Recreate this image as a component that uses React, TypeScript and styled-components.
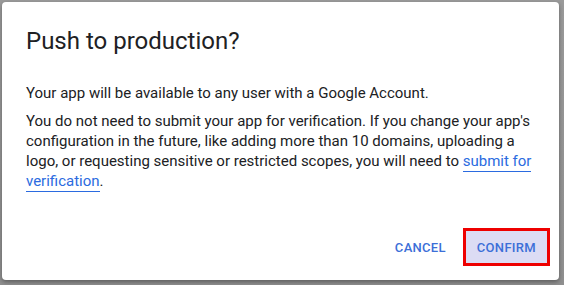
import React from "react";
import styled, { createGlobalStyle } from "styled-components";

const GlobalStyle = createGlobalStyle`
  html, body {
    margin: 0;
    padding: 0;
    background: #939393;
  }
  body {
    font-family: Roboto, "Liberation Sans", Arial, sans-serif;
    -webkit-font-smoothing: antialiased;
  }
`;

const Backdrop = styled.div`
  width: 564px;
  height: 285px;
  box-sizing: border-box;
  padding: 2px 5px 5px 2px;
  background: linear-gradient(to bottom, #9a9a9a 0%, #8f8f8f 100%);
`;

const Dialog = styled.div`
  width: 557px;
  height: 278px;
  box-sizing: border-box;
  background: #ffffff;
  border-radius: 4px;
  box-shadow: 0 2px 4px rgba(0, 0, 0, 0.35);
  padding: 23px 9px 14px 24px;
  display: flex;
  flex-direction: column;
`;

const Title = styled.h2`
  margin: 0;
  font-size: 24px;
  line-height: 32px;
  font-weight: 400;
  color: #202124;
`;

const Body = styled.div`
  margin-top: 26px;
  padding-right: 12px;
  flex: 1;
`;

const Paragraph = styled.p`
  margin: 0 0 8px;
  font-size: 15px;
  line-height: 20px;
  color: #202124;
`;

const Link = styled.a`
  color: #2b6be0;
  text-decoration: none;
  border-bottom: 1px solid #2b6be0;
  padding-bottom: 1px;
`;

const Actions = styled.div`
  display: flex;
  justify-content: flex-end;
  align-items: center;
  gap: 4px;
`;

const Button = styled.button<{ $primary?: boolean }>`
  font-family: Roboto, "Liberation Sans", Arial, sans-serif;
  font-size: 13px;
  font-weight: 500;
  letter-spacing: 0.3px;
  text-transform: uppercase;
  color: #3c6fd8;
  height: 38px;
  box-sizing: border-box;
  padding: 0 ${({ $primary }) => ($primary ? "11px" : "10px")};
  background: ${({ $primary }) => ($primary ? "#dcdcf4" : "transparent")};
  border: 3px solid ${({ $primary }) => ($primary ? "#ee0000" : "transparent")};
  border-radius: 0;
  cursor: pointer;
`;

export default function App() {
  return (
    <>
      <GlobalStyle />
      <Backdrop>
        <Dialog>
          <Title>Push to production?</Title>
          <Body>
            <Paragraph>
              Your app will be available to any user with a Google Account.
            </Paragraph>
            <Paragraph>
              You do not need to submit your app for verification. If you change
              your app's configuration in the future, like adding more than 10
              domains, uploading a logo, or requesting sensitive or restricted
              scopes, you will need to <Link href="#">submit for verification</Link>.
            </Paragraph>
          </Body>
          <Actions>
            <Button>Cancel</Button>
            <Button $primary>Confirm</Button>
          </Actions>
        </Dialog>
      </Backdrop>
    </>
  );
}
